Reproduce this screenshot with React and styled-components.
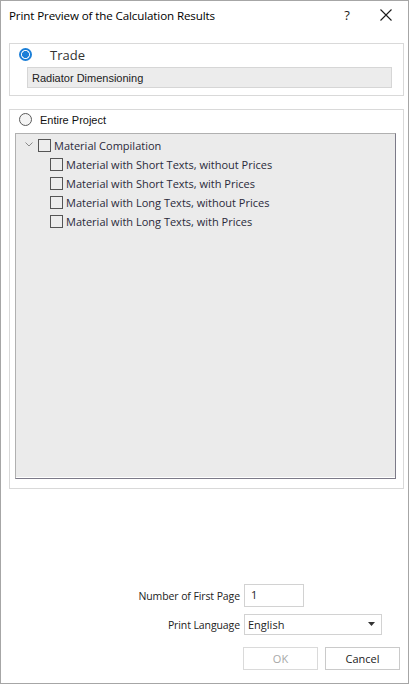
import React from 'react';
import styled, { createGlobalStyle } from 'styled-components';

const GlobalStyle = createGlobalStyle`
  html, body {
    margin: 0;
    padding: 0;
    background: #fff;
  }
  * {
    box-sizing: border-box;
  }
`;

const reports = [
  'Material with Short Texts, without Prices',
  'Material with Short Texts, with Prices',
  'Material with Long Texts, without Prices',
  'Material with Long Texts, with Prices',
];

const App = () => (
  <>
    <GlobalStyle />
    <Window>
      <TitleBar>
        <Title>Print Preview of the Calculation Results</Title>
        <TitleButton $w={34}>?</TitleButton>
        <TitleButton $w={44}>
          <svg width="12" height="12" viewBox="0 0 12 12">
            <path d="M0.5 0.5 L11.5 11.5 M11.5 0.5 L0.5 11.5" stroke="#1a1a1a" strokeWidth="1.1" fill="none" />
          </svg>
        </TitleButton>
      </TitleBar>

      <Content>
        <Group $h={53}>
          <RadioRow $gap={18} $top={4}>
            <Radio $checked />
            <BigLabel>Trade</BigLabel>
          </RadioRow>
          <ReadOnlyBox>Radiator Dimensioning</ReadOnlyBox>
        </Group>

        <Group $h={380} $mt={13}>
          <RadioRow $gap={8} $top={3}>
            <Radio />
            <SmallLabel>Entire Project</SmallLabel>
          </RadioRow>
          <Tree>
            <TreeRow $indent={0}>
              <Chevron>
                <svg width="8" height="5" viewBox="0 0 8 5">
                  <path d="M0.5 0.5 L4 4 L7.5 0.5" stroke="#8a8a8a" strokeWidth="1" fill="none" />
                </svg>
              </Chevron>
              <CheckBox />
              <TreeText>Material Compilation</TreeText>
            </TreeRow>
            {reports.map((r) => (
              <TreeRow key={r} $indent={26}>
                <CheckBox />
                <TreeText>{r}</TreeText>
              </TreeRow>
            ))}
          </Tree>
        </Group>

        <Footer>
          <Fields>
            <FieldLabel>Number of First Page</FieldLabel>
            <TextInput>1</TextInput>
            <FieldLabel>Print Language</FieldLabel>
            <Select>
              <span>English</span>
              <svg width="7" height="4" viewBox="0 0 7 4">
                <path d="M0 0 H7 L3.5 4 Z" fill="#333" />
              </svg>
            </Select>
          </Fields>
          <Buttons>
            <Button disabled>OK</Button>
            <Button>Cancel</Button>
          </Buttons>
        </Footer>
      </Content>
    </Window>
  </>
);

const Window = styled.div`
  width: 409px;
  height: 684px;
  border: 1px solid #a6a6a6;
  background: #fff;
  display: flex;
  flex-direction: column;
  font-family: 'Liberation Sans', Arial, sans-serif;
  color: #1e1e1e;
`;

const TitleBar = styled.div`
  height: 30px;
  display: flex;
  align-items: center;
  padding-left: 8px;
  padding-bottom: 2px;
  flex-shrink: 0;
`;

const Title = styled.div`
  flex: 1;
  font-family: 'Open Sans', 'Noto Sans', sans-serif;
  font-size: 11.6px;
  letter-spacing: -0.12px;
  color: #000;
`;

const TitleButton = styled.div`
  width: ${(p) => p.$w}px;
  height: 28px;
  display: flex;
  align-items: center;
  justify-content: center;
  font-family: 'Open Sans', sans-serif;
  font-size: 13px;
  color: #1a1a1a;
`;

const Content = styled.div`
  flex: 1;
  display: flex;
  flex-direction: column;
  padding: 12px 4px 13px 8px;
`;

const Group = styled.div`
  height: ${(p) => p.$h}px;
  margin-top: ${(p) => p.$mt || 0}px;
  border: 1px solid #d9d9d9;
  display: flex;
  flex-direction: column;
`;

const RadioRow = styled.div`
  display: flex;
  align-items: center;
  gap: ${(p) => p.$gap}px;
  padding-left: 9px;
  margin-top: ${(p) => p.$top}px;
  height: 13px;
`;

const Radio = styled.span`
  width: 13px;
  height: 13px;
  border-radius: 50%;
  flex-shrink: 0;
  border: ${(p) => (p.$checked ? '2px solid #1b7fd8' : '1px solid #5a5a5a')};
  background: ${(p) => (p.$checked ? 'radial-gradient(circle, #1b7fd8 0 3.2px, #fff 3.8px)' : '#f4f4f4')};
`;

const BigLabel = styled.span`
  font-family: 'Open Sans', 'Noto Sans', sans-serif;
  font-size: 13px;
  color: #333;
`;

const SmallLabel = styled.span`
  font-family: 'Liberation Sans', Arial, sans-serif;
  font-size: 11px;
  color: #111;
`;

const ReadOnlyBox = styled.div`
  margin: 6px 11px 0 17px;
  height: 21px;
  background: #ececec;
  border: 1px solid #d6d6d6;
  padding-left: 4px;
  display: flex;
  align-items: center;
  font-size: 11px;
  color: #222;
`;

const Tree = styled.div`
  margin: 7px 7px 0 5px;
  height: 346px;
  background: #ebebeb;
  border: 1px solid;
  border-color: #b0b0b0 #7c7a88 #7c7a88 #b0b0b0;
  box-shadow: inset 0 -1px 0 #fff;
  padding-top: 2px;
`;

const TreeRow = styled.div`
  height: 19px;
  display: flex;
  align-items: center;
  padding-left: ${(p) => 8 + p.$indent}px;
`;

const Chevron = styled.span`
  width: 14px;
  display: flex;
  align-items: center;
  padding-left: 1px;
  margin-top: -2px;
`;

const CheckBox = styled.span`
  width: 13px;
  height: 13px;
  border: 1px solid #555;
  background: #ededed;
  flex-shrink: 0;
`;

const TreeText = styled.span`
  margin-left: 3px;
  font-family: 'Open Sans', 'Noto Sans', sans-serif;
  font-size: 11px;
  color: #2a2a3a;
`;

const Footer = styled.div`
  margin-top: auto;
  display: flex;
  flex-direction: column;
`;

const Fields = styled.div`
  display: grid;
  grid-template-columns: 231px auto;
  column-gap: 4px;
  row-gap: 7px;
  align-items: center;
  justify-items: start;
`;

const FieldLabel = styled.span`
  justify-self: end;
  font-family: 'Open Sans', 'Noto Sans', sans-serif;
  font-size: 10.5px;
  letter-spacing: -0.1px;
  color: #222;
`;

const TextInput = styled.div`
  width: 60px;
  height: 23px;
  border: 1px solid #d2d2d2;
  padding: 2px 6px;
  font-family: 'Open Sans', 'Noto Sans', sans-serif;
  font-size: 11px;
`;

const Select = styled.div`
  width: 138px;
  height: 21px;
  border: 1px solid #d2d2d2;
  padding: 0 6px 1px 3px;
  display: flex;
  align-items: center;
  justify-content: space-between;
  font-family: 'Open Sans', 'Noto Sans', sans-serif;
  font-size: 11px;
`;

const Buttons = styled.div`
  display: flex;
  justify-content: flex-end;
  gap: 7px;
  margin-top: 12px;
  padding-right: 4px;
`;

const Button = styled.button`
  width: 75px;
  height: 23px;
  border: 1px solid ${(p) => (p.disabled ? '#dadada' : '#cacaca')};
  background: #fff;
  font-family: 'Open Sans', 'Noto Sans', sans-serif;
  font-size: 11px;
  color: ${(p) => (p.disabled ? '#a8a8a8' : '#222')};
  padding: 0;
`;

export default App;
